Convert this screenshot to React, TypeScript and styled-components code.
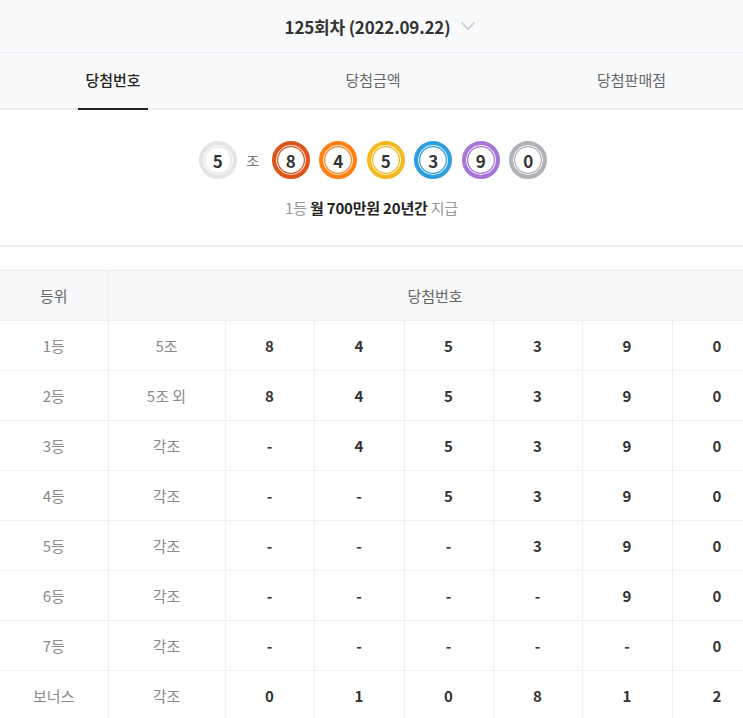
import React from "react";
import styled, { createGlobalStyle } from "styled-components";

const Global = createGlobalStyle`
  html, body { margin: 0; padding: 0; background: #fff; overflow: hidden; }
  body { font-family: "Noto Sans CJK KR", "Noto Sans", sans-serif; color: #333; }
  * { box-sizing: border-box; }
`;

const Page = styled.div`
  width: 743px;
  overflow: hidden;
`;

const Header = styled.div`
  height: 53px;
  background: #f9fafc;
  border-bottom: 1px solid #eceef1;
  display: flex;
  align-items: center;
  justify-content: center;
  gap: 10px;
  padding-left: 18px;
`;

const Title = styled.div`
  font-size: 17px;
  font-weight: 700;
  color: #333;
  line-height: 1;
  letter-spacing: -0.2px;
`;

const TabBar = styled.div`
  height: 57px;
  background: #f9fafc;
  border-bottom: 2px solid #eceef2;
  display: grid;
  grid-template-columns: 226px 294px 1fr;
`;

const Tab = styled.div`
  display: flex;
  justify-content: center;
  align-items: stretch;
  margin-bottom: -2px;
`;

const TabLabel = styled.span<{ $active?: boolean }>`
  display: flex;
  align-items: center;
  padding: 0 7px 2px;
  font-size: 15px;
  line-height: 1;
  color: ${(p) => (p.$active ? "#222" : "#666")};
  font-weight: ${(p) => (p.$active ? 500 : 400)};
  border-bottom: 2px solid ${(p) => (p.$active ? "#222" : "transparent")};
`;

const Result = styled.div`
  padding: 31px 0 0;
  height: 137px;
  border-bottom: 2px solid #eceef2;
  display: flex;
  flex-direction: column;
  align-items: center;
`;

const BallRow = styled.div`
  display: flex;
  align-items: center;
  gap: 9.5px;
  padding-left: 3px;
`;

const Ball = styled.div<{ $color: string }>`
  width: 38px;
  height: 38px;
  border-radius: 50%;
  border: 4px solid ${(p) => p.$color};
  box-shadow: inset 0 0 0 1px #fff, inset 0 0 0 2.2px ${(p) => p.$color};
  background: #fff;
  display: flex;
  align-items: center;
  justify-content: center;
  font-size: 17px;
  font-weight: 700;
  color: #333;
  line-height: 1;
`;

const Jo = styled.span`
  font-size: 14px;
  color: #777;
  margin: 0 3px 0 0;
  line-height: 1;
`;

const Prize = styled.div`
  margin-top: 21px;
  font-size: 15px;
  line-height: 1;
  color: #999;
  letter-spacing: -0.2px;
  b {
    color: #222;
    font-weight: 700;
  }
`;

const Gap = styled.div`
  height: 23px;
`;

const Table = styled.table`
  width: 762px;
  table-layout: fixed;
  border-collapse: collapse;
`;

const HeadCell = styled.th`
  height: 50px;
  background: #f7f8fa;
  border: 1px solid #eceef2;
  border-left: none;
  font-size: 15px;
  font-weight: 400;
  color: #666;
  text-align: center;
  padding: 0;
`;

const Cell = styled.td<{ $num?: boolean; $first?: boolean }>`
  height: 50px;
  border: 1px solid #eef0f3;
  border-left: ${(p) => (p.$first ? "none" : "1px solid #eef0f3")};
  font-size: 15px;
  text-align: center;
  padding: 0;
  color: ${(p) => (p.$num ? "#333" : "#8a8a8a")};
  font-weight: ${(p) => (p.$num ? 700 : 400)};
`;

const balls = [
  { n: "8", c: "#dd5519" },
  { n: "4", c: "#ff8010" },
  { n: "5", c: "#f5b81c" },
  { n: "3", c: "#2f9ede" },
  { n: "9", c: "#a676d6" },
  { n: "0", c: "#b0b0b9" },
];

const rows: [string, string, string[]][] = [
  ["1등", "5조", ["8", "4", "5", "3", "9", "0"]],
  ["2등", "5조 외", ["8", "4", "5", "3", "9", "0"]],
  ["3등", "각조", ["-", "4", "5", "3", "9", "0"]],
  ["4등", "각조", ["-", "-", "5", "3", "9", "0"]],
  ["5등", "각조", ["-", "-", "-", "3", "9", "0"]],
  ["6등", "각조", ["-", "-", "-", "-", "9", "0"]],
  ["7등", "각조", ["-", "-", "-", "-", "-", "0"]],
  ["보너스", "각조", ["0", "1", "0", "8", "1", "2"]],
];

const Chevron = () => (
  <svg width="16" height="10" viewBox="0 0 16 10" fill="none">
    <path d="M1.5 1.5 L8 8 L14.5 1.5" stroke="#c8c8cc" strokeWidth="1.6" />
  </svg>
);

export default function App() {
  return (
    <Page>
      <Global />
      <Header>
        <Title>125회차 (2022.09.22)</Title>
        <Chevron />
      </Header>
      <TabBar>
        <Tab>
          <TabLabel $active>당첨번호</TabLabel>
        </Tab>
        <Tab>
          <TabLabel>당첨금액</TabLabel>
        </Tab>
        <Tab>
          <TabLabel>당첨판매점</TabLabel>
        </Tab>
      </TabBar>
      <Result>
        <BallRow>
          <Ball $color="#e4e4e6">5</Ball>
          <Jo>조</Jo>
          {balls.map((b, i) => (
            <Ball key={i} $color={b.c}>
              {b.n}
            </Ball>
          ))}
        </BallRow>
        <Prize>
          1등 <b>월 700만원 20년간</b> 지급
        </Prize>
      </Result>
      <Gap />
      <Table>
        <colgroup>
          <col style={{ width: 108 }} />
          <col style={{ width: 117 }} />
          <col style={{ width: 89 }} />
          <col style={{ width: 90 }} />
          <col style={{ width: 89 }} />
          <col style={{ width: 89 }} />
          <col style={{ width: 90 }} />
          <col style={{ width: 90 }} />
        </colgroup>
        <thead>
          <tr>
            <HeadCell>등위</HeadCell>
            <HeadCell colSpan={7}>당첨번호</HeadCell>
          </tr>
        </thead>
        <tbody>
          {rows.map(([rank, grp, nums]) => (
            <tr key={rank}>
              <Cell $first>{rank}</Cell>
              <Cell>{grp}</Cell>
              {nums.map((n, i) => (
                <Cell key={i} $num>
                  {n}
                </Cell>
              ))}
            </tr>
          ))}
        </tbody>
      </Table>
    </Page>
  );
}
